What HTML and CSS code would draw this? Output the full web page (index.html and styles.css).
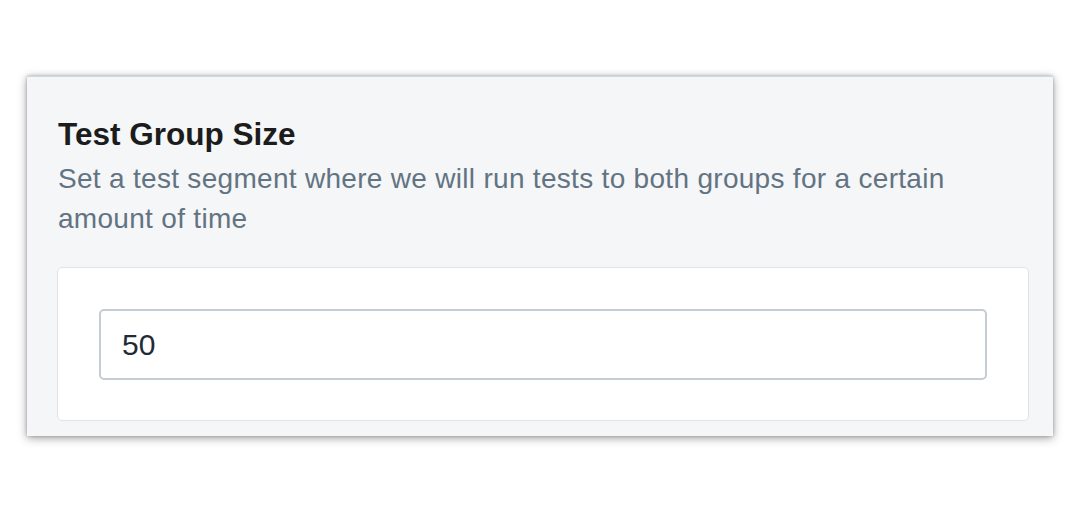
FILE: index.html
```html
<!DOCTYPE html>
<html>
<head>
<meta charset="utf-8">
<link rel="stylesheet" href="styles.css">
</head>
<body>
<div class="panel">
  <h2 class="title">Test Group Size</h2>
  <p class="desc">Set a test segment where we will run tests to both groups for a certain amount of time</p>
  <div class="card">
    <div class="input">50</div>
  </div>
</div>
</body>
</html>
```
FILE: styles.css
```css
html, body {
  margin: 0;
  padding: 0;
  background: #ffffff;
  font-family: "Liberation Sans", Arial, sans-serif;
}
body {
  width: 1080px;
  height: 512px;
  overflow: hidden;
}
.panel {
  margin: 76px 0 0 27px;
  width: 1026px;
  height: 360px;
  box-sizing: border-box;
  background: #f4f6f8;
  border-top: 1px solid #c9d9e6;
  padding: 37px 24px 0 30px;
  box-shadow: 0 2px 9px rgba(0,0,0,0.38), 0 0 3px rgba(0,0,0,0.22);
  overflow: hidden;
}
.title {
  margin: 0 0 0 1px;
  font-size: 31.5px;
  line-height: 40px;
  font-weight: 700;
  color: #1c1c1c;
}
.desc {
  margin: 4.5px 0 28.5px 1px;
  font-size: 28px;
  letter-spacing: 0.3px;
  line-height: 40px;
  color: #637381;
  width: 920px;
}
.card {
  background: #ffffff;
  border: 1px solid #dfe3e8;
  border-radius: 5px;
  padding: 41px 41px;
  height: 154px;
  box-sizing: border-box;
}
.input {
  height: 71px;
  box-sizing: border-box;
  border: 2px solid #c4cdd5;
  border-radius: 5px;
  padding-left: 21px;
  font-size: 30px;
  line-height: 67px;
  color: #212b36;
}
```
